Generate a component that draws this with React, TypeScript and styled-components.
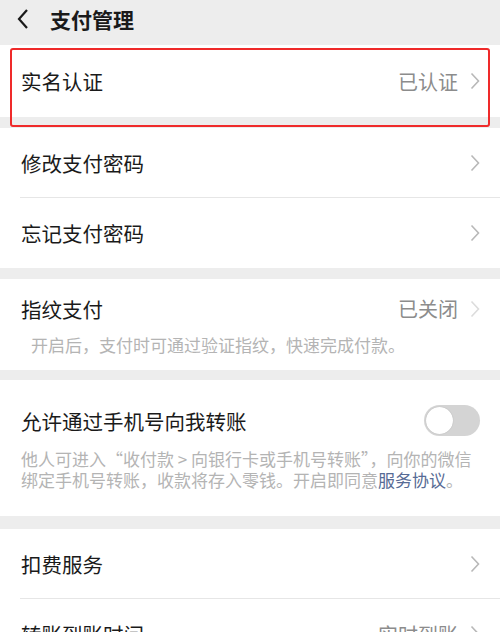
import React from 'react';
import styled, { createGlobalStyle } from 'styled-components';

const GlobalStyle = createGlobalStyle`
  html, body {
    margin: 0;
    padding: 0;
    background: #ededed;
  }
  body {
    font-family: "Noto Sans CJK SC", "Noto Sans", sans-serif;
    color: #1a1a1a;
  }
`;

const Page = styled.div`
  width: 500px;
  height: 632px;
  overflow: hidden;
  background: #ededed;
  position: relative;
`;

const Header = styled.div`
  height: 45px;
  display: flex;
  align-items: flex-start;
  padding: 6px 0 0 16px;
  box-sizing: border-box;
  gap: 20px;
`;

const Title = styled.div`
  font-size: 21px;
  font-weight: 700;
  line-height: 26px;
`;

const Section = styled.div<{ $gap?: number }>`
  background: #ffffff;
  margin-bottom: ${(p) => p.$gap ?? 11}px;
`;

const Row = styled.div<{ $height?: number; $divider?: boolean }>`
  height: ${(p) => p.$height ?? 70}px;
  display: flex;
  align-items: center;
  padding: 0 20px 0 21px;
  position: relative;

  ${(p) =>
    p.$divider &&
    `
    &::after {
      content: '';
      position: absolute;
      left: 20px;
      right: 0;
      bottom: 0;
      height: 1px;
      background: #e6e6e6;
    }
  `}
`;

const Label = styled.div`
  flex: 1;
  font-size: 20.5px;
  line-height: 28px;
`;

const Value = styled.div`
  font-size: 20px;
  color: #8c8c8c;
  margin-right: 12px;
`;

const Block = styled.div<{ $top: number; $bottom: number }>`
  padding: ${(p) => `${p.$top}px 20px ${p.$bottom}px 21px`};
`;

const BlockHead = styled.div`
  display: flex;
  align-items: center;
`;

const Desc = styled.div<{ $indent?: number; $space: number }>`
  font-size: 17px;
  line-height: 21px;
  color: #b4b4b4;
  padding-left: ${(p) => p.$indent ?? 0}px;
  margin-top: ${(p) => p.$space}px;
`;

const Link = styled.span`
  color: #576b95;
`;

const Toggle = styled.div`
  width: 56px;
  height: 31px;
  border-radius: 16px;
  background: #d4d4d4;
  position: relative;

  &::after {
    content: '';
    position: absolute;
    left: 2px;
    top: 2px;
    width: 27px;
    height: 27px;
    border-radius: 50%;
    background: #ffffff;
    box-shadow: 0 0 1px rgba(0, 0, 0, 0.25);
  }
`;

const Highlight = styled.div`
  position: absolute;
  left: 10px;
  top: 48px;
  width: 480px;
  height: 79px;
  border: 2px solid #ef2a2a;
  border-radius: 3px;
  box-sizing: border-box;
  pointer-events: none;
`;

const Chevron = ({ color = '#b8b8b8' }: { color?: string }) => (
  <svg width="10" height="18" viewBox="0 0 10 18">
    <polyline points="1.5,1.5 8.5,9 1.5,16.5" fill="none" stroke={color} strokeWidth="1.6" />
  </svg>
);

const BackIcon = () => (
  <svg width="14" height="22" viewBox="0 0 14 22" style={{ marginTop: 2 }}>
    <polyline points="11,2 3,11 11,20" fill="none" stroke="#1a1a1a" strokeWidth="2.2" />
  </svg>
);

const App: React.FC = () => {
  return (
    <Page>
      <GlobalStyle />
      <Header>
        <BackIcon />
        <Title>支付管理</Title>
      </Header>

      <Section>
        <Row $height={72}>
          <Label>实名认证</Label>
          <Value>已认证</Value>
          <Chevron />
        </Row>
      </Section>

      <Section>
        <Row $divider>
          <Label>修改支付密码</Label>
          <Chevron />
        </Row>
        <Row>
          <Label>忘记支付密码</Label>
          <Chevron />
        </Row>
      </Section>

      <Section $gap={10}>
        <Block $top={15} $bottom={15}>
          <BlockHead>
            <Label>指纹支付</Label>
            <Value>已关闭</Value>
            <Chevron color="#dcdcdc" />
          </BlockHead>
          <Desc $indent={10} $space={11}>
            开启后，支付时可通过验证指纹，快速完成付款。
          </Desc>
        </Block>
      </Section>

      <Section $gap={13}>
        <Block $top={25} $bottom={26}>
          <BlockHead>
            <Label>允许通过手机号向我转账</Label>
            <Toggle />
          </BlockHead>
          <Desc $space={12}>
            他人可进入“收付款 &gt; 向银行卡或手机号转账”，向你的微信绑定手机号转账，收款将存入零钱。开启即同意<Link>服务协议</Link>。
          </Desc>
        </Block>
      </Section>

      <Section>
        <Row $divider>
          <Label>扣费服务</Label>
          <Chevron />
        </Row>
        <Row>
          <Label>转账到账时间</Label>
          <Value>实时到账</Value>
          <Chevron />
        </Row>
      </Section>

      <Highlight />
    </Page>
  );
};

export default App;
